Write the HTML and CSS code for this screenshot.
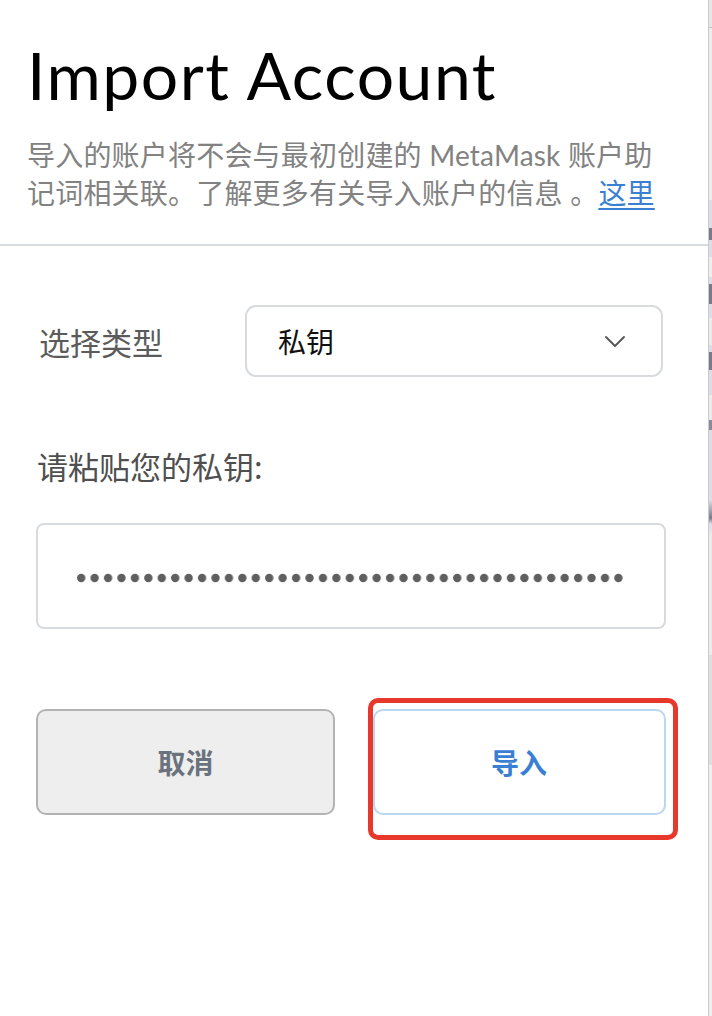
FILE: index.html
```html
<!DOCTYPE html>
<html lang="zh">
<head>
<meta charset="utf-8">
<title>Import Account</title>
<link rel="stylesheet" href="styles.css">
</head>
<body>
<div class="window">
  <main class="panel">
    <header class="head">
      <h1 class="title">Import Account</h1>
      <p class="desc">导入的账户将不会与最初创建的 MetaMask 账户助<br>记词相关联。了解更多有关导入账户的信息 。<a class="link" href="#">这里</a></p>
    </header>
    <section class="form">
      <div class="type-row">
        <span class="type-label">选择类型</span>
        <div class="select">
          <span class="select-value">私钥</span>
          <svg class="chevron" width="20" height="11" viewBox="0 0 20 11"><path d="M1 1 L10 10 L19 1" fill="none" stroke="#555" stroke-width="1.8" stroke-linecap="round" stroke-linejoin="round"/></svg>
        </div>
      </div>
      <label class="paste-label">请粘贴您的私钥:</label>
      <div class="keybox">
        <svg class="dots" width="550" height="10" viewBox="0 0 550 10">
          <defs><pattern id="dot" width="13.43" height="10" patternUnits="userSpaceOnUse"><circle cx="4.2" cy="5" r="4.2" fill="#5f5f5f"/></pattern></defs>
          <rect width="547" height="10" fill="url(#dot)"/>
        </svg>
      </div>
      <div class="actions">
        <button class="btn cancel">取消</button>
        <button class="btn import">导入</button>
      </div>
    </section>
    <div class="highlight"></div>
  </main>
  <div class="edge"></div>
</div>
</body>
</html>
```
FILE: styles.css
```css
* { box-sizing: border-box; }
html, body { margin: 0; padding: 0; background: #fff; }
body { font-family: Lato, "Noto Sans CJK SC", sans-serif; }

.window { display: flex; width: 712px; height: 1016px; overflow: hidden; }
.panel { position: relative; width: 708px; flex: none; background: #fff; }
.edge {
  flex: 1;
  border-left: 1px solid #cbcbcf;
  background: linear-gradient(to bottom,
    #e6e6e6 0, #e6e6e6 27px, #c4c4c4 27px, #c4c4c4 28px, #ededed 28px, #ededed 200px,
    #dcdde6 200px, #dcdde6 228px, #7a7a8e 228px, #7a7a8e 240px, #dcdde6 240px, #dcdde6 257px,
    #eeeeee 257px, #eeeeee 277px, #dcdde6 277px, #dcdde6 284px, #7a7a8e 284px, #7a7a8e 304px,
    #dcdde6 304px, #dcdde6 318px, #ececec 318px, #ececec 345px, #dcdde6 345px, #dcdde6 352px,
    #7a7a8e 352px, #7a7a8e 370px, #dcdde6 370px, #dcdde6 395px, #ececec 395px, #ececec 420px,
    #dcdde6 420px, #dcdde6 410px, #8a8a9a 410px, #8a8a9a 430px, #dcdde6 430px, #dcdde6 500px,
    #7a7a8e 518px, #dcdde6 524px, #ececec 537px, #ececec 655px, #dedede 655px, #dedede 765px,
    #efefef 765px, #efefef 100%);
}

.head { padding: 42px 0 32px 27px; border-bottom: 2px solid #d9dcdf; }
.title {
  margin: 0 0 28px 0;
  font-family: Lato, sans-serif;
  font-weight: 400;
  font-size: 66px;
  line-height: 66px;
  letter-spacing: 1.5px;
  color: #000;
}
.desc {
  margin: 0;
  font-size: 28px;
  line-height: 38px;
  letter-spacing: 0.2px;
  color: #828282;
}
.link { color: #3b7fd3; text-decoration: underline; text-underline-offset: 4px; }

.form { padding: 59px 42px 0 36px; }
.type-row { display: flex; align-items: center; height: 72px; }
.type-label {
  padding-left: 3px;
  font-family: "Noto Sans CJK SC", sans-serif;
  font-size: 31px;
  color: #5b5b5b;
}
.select {
  display: flex;
  align-items: center;
  justify-content: space-between;
  width: 418px;
  height: 72px;
  margin-left: auto;
  margin-right: 3px;
  padding: 0 36px 0 31px;
  border: 2px solid #d8dbde;
  border-radius: 11px;
}
.select-value { font-family: "Noto Sans CJK SC", sans-serif; font-size: 28px; color: #111; }
.chevron { display: block; }

.paste-label {
  display: block;
  margin-top: 69px;
  padding-left: 1px;
  font-family: "Noto Sans CJK SC", sans-serif;
  font-size: 31px;
  line-height: 40px;
  color: #4f4f4f;
}
.keybox {
  display: flex;
  align-items: center;
  height: 106px;
  margin-top: 37px;
  padding: 3px 0 0 39px;
  border: 2px solid #d8dbde;
  border-radius: 8px;
}
.dots { display: block; }

.actions { display: flex; gap: 38px; height: 106px; margin-top: 80px; }
.btn {
  height: 106px;
  border-radius: 10px;
  font-family: "Noto Sans CJK SC", sans-serif;
  font-size: 28px;
  font-weight: 700;
  cursor: pointer;
}
.cancel { width: 299px; background: #eeeeee; border: 2px solid #b3b3b3; color: #6a737d; }
.import { flex: 1; padding-right: 7px; background: #fff; border: 2px solid #bad6f0; color: #3b7fd3; }

.highlight {
  position: absolute;
  left: 368px;
  top: 698px;
  width: 310px;
  height: 142px;
  border: 5px solid #e8382b;
  border-radius: 10px;
}
```
